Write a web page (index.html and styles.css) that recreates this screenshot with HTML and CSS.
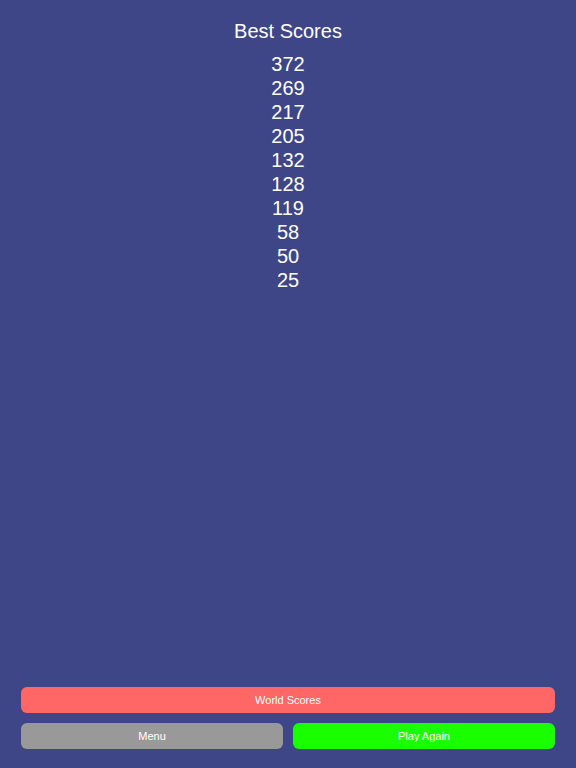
FILE: index.html
```html
<!DOCTYPE html>
<html lang="en">
<head>
    <meta charset="UTF-8">
    <meta name="viewport" content="width=device-width, initial-scale=1.0">
    <title>Best Scores</title>
    <link rel="stylesheet" href="styles.css">
</head>
<body>

<div class="scores">
    <h1 class="scores-title">Best Scores</h1>
    <ul class="score-list">
        <li>372</li>
        <li>269</li>
        <li>217</li>
        <li>205</li>
        <li>132</li>
        <li>128</li>
        <li>119</li>
        <li>58</li>
        <li>50</li>
        <li>25</li>
    </ul>
</div>

<div class="actions">
    <button class="btn world-btn">World Scores</button>
    <div class="btn-row">
        <button class="btn menu-btn">Menu</button>
        <button class="btn play-btn">Play Again</button>
    </div>
</div>

</body>
</html>
```
FILE: styles.css
```css
html, body {
    height: 100%;
}

body {
    background-color: #3E4687;
    margin: 0;
    display: flex;
    flex-direction: column;
    font-family: "Liberation Sans", Arial, sans-serif;
    color: white;
}

.scores {
    flex: 1;
    text-align: center;
    padding-top: 19px;
}

.scores-title {
    margin: 0 0 9px;
    font-size: 20px;
    font-weight: normal;
    line-height: 24px;
}

.score-list {
    list-style: none;
    margin: 0;
    padding: 0;
    font-size: 20px;
    line-height: 24px;
}

.actions {
    display: flex;
    flex-direction: column;
    gap: 10px;
    padding: 0 21px 19px;
}

.btn-row {
    display: flex;
    gap: 10px;
}

.btn {
    height: 26px;
    border: none;
    border-radius: 6px;
    color: white;
    font-family: "Liberation Sans", Arial, sans-serif;
    font-size: 11px;
    padding: 0;
    cursor: pointer;
}

.btn-row .btn {
    flex: 1;
}

.world-btn {
    background-color: #FF6666;
}

.menu-btn {
    background-color: #999999;
}

.play-btn {
    background-color: #1AFF00;
}
```
